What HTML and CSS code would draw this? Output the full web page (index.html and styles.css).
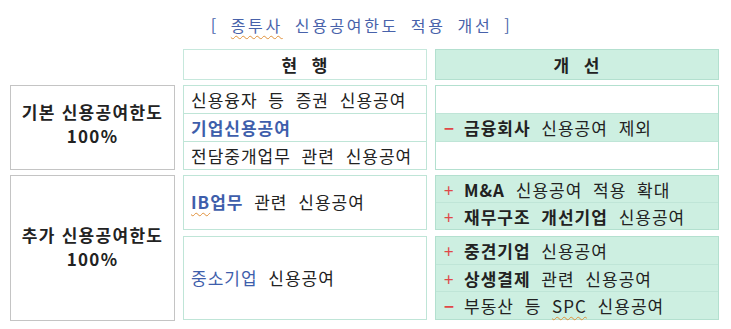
FILE: index.html
```html
<!DOCTYPE html>
<html lang="ko">
<head>
<meta charset="utf-8">
<title>종투사 신용공여한도 적용 개선</title>
<link rel="stylesheet" href="styles.css">
</head>
<body>
<div class="page">
  <h1 class="title"><span>[ <span class="spell">종투사</span> 신용공여한도 적용 개선 ]</span></h1>
  <div class="grid">
    <div class="blank"></div>
    <div class="head cur">현 행</div>
    <div class="head new">개 선</div>

    <div class="label first"><span class="line">기본 신용공여한도</span><span class="line">100%</span></div>
    <div class="box cur rows3">
      <div class="row"><span>신용융자 등 증권 신용공여</span></div>
      <div class="row"><span class="blue b">기업신용공여</span></div>
      <div class="row"><span>전담중개업무 관련 신용공여</span></div>
    </div>
    <div class="box newbox rows3">
      <div class="row"></div>
      <div class="row fill"><span><span class="minus">−</span><b>금융회사</b> 신용공여 제외</span></div>
      <div class="row"></div>
    </div>

    <div class="label"><span class="line">추가 신용공여한도</span><span class="line">100%</span></div>
    <div class="split">
      <div class="box cur single"><div class="row"><span><span class="blue b"><span class="spell">IB</span>업무</span> 관련 신용공여</span></div></div>
      <div class="box cur single"><div class="row"><span><span class="blue">중소기업</span> 신용공여</span></div></div>
    </div>
    <div class="split">
      <div class="box newbox fill rows2">
        <div class="row"><span><span class="plus">+</span><b>M&amp;A</b> 신용공여 적용 확대</span></div>
        <div class="row"><span><span class="plus">+</span><b>재무구조 개선기업</b> 신용공여</span></div>
      </div>
      <div class="box newbox fill rows3">
        <div class="row"><span><span class="plus">+</span><b>중견기업</b> 신용공여</span></div>
        <div class="row"><span><span class="plus">+</span><b>상생결제</b> 관련 신용공여</span></div>
        <div class="row"><span><span class="minus">−</span>부동산 등 <span class="spell">SPC</span> 신용공여</span></div>
      </div>
    </div>
  </div>
</div>
</body>
</html>
```

FILE: styles.css
```css
html, body {
  margin: 0;
  padding: 0;
  background: #ffffff;
}

body {
  font-family: "Noto Sans CJK KR", "Noto Sans", "Liberation Sans", sans-serif;
  color: #222222;
}

.page {
  width: 731px;
  padding: 0 12px 0 10px;
  box-sizing: border-box;
}

.title {
  margin: 0;
  height: 49px;
  display: flex;
  align-items: center;
  justify-content: center;
  font-size: 16px;
  font-weight: 400;
  color: #4862aa;
  letter-spacing: 2.6px;
  word-spacing: 5px;
  padding-right: 6px;
  white-space: pre;
}

.spell {
  text-decoration: underline wavy #e0903a;
  text-decoration-thickness: 1px;
  text-underline-offset: 3px;
}

.grid {
  display: grid;
  grid-template-columns: 165px 244px 284px;
  grid-template-rows: 31px 85px 146px;
  column-gap: 8px;
  row-gap: 5px;
}

.head {
  display: flex;
  align-items: center;
  justify-content: center;
  font-size: 17px;
  font-weight: 700;
  letter-spacing: 1px;
  word-spacing: 8px;
  border: 1px solid #c6e8dc;
  box-sizing: border-box;
}

.head.new {
  background: #cdefe1;
  border-color: #b3e0cf;
}

.label {
  border: 1px solid #c4c4c4;
  box-sizing: border-box;
  display: flex;
  flex-direction: column;
  align-items: center;
  justify-content: center;
  row-gap: 0;
  text-align: center;
  font-size: 17px;
  font-weight: 700;
  letter-spacing: 1.3px;
  padding-bottom: 3px;
}

.label .line {
  display: block;
  line-height: 24px;
  height: 24px;
}

.label.first {
  padding-bottom: 8px;
}

.box {
  border: 1px solid #bfe5d7;
  box-sizing: border-box;
  display: flex;
  flex-direction: column;
}

.newbox {
  border-color: #b3e0cf;
}

.row {
  flex: 1;
  display: flex;
  align-items: center;
  padding-left: 7px;
  font-size: 17px;
  letter-spacing: 1px;
  word-spacing: 5px;
  white-space: nowrap;
}

.row + .row {
  border-top: 1px solid #bfe5d7;
}

.newbox .row {
  padding-left: 8px;
}

.fill {
  background: #cdefe1;
}

.split {
  display: grid;
  grid-template-rows: 55px 84px;
  row-gap: 6px;
}

.single .row {
  padding-bottom: 2px;
}

.blue {
  color: #3e5eab;
}

.b, b {
  font-weight: 700;
}

.plus, .minus {
  color: #e04848;
  display: inline-block;
  width: 20px;
}

.minus {
  font-weight: 700;
}

.plus {
  font-weight: 400;
}
```
